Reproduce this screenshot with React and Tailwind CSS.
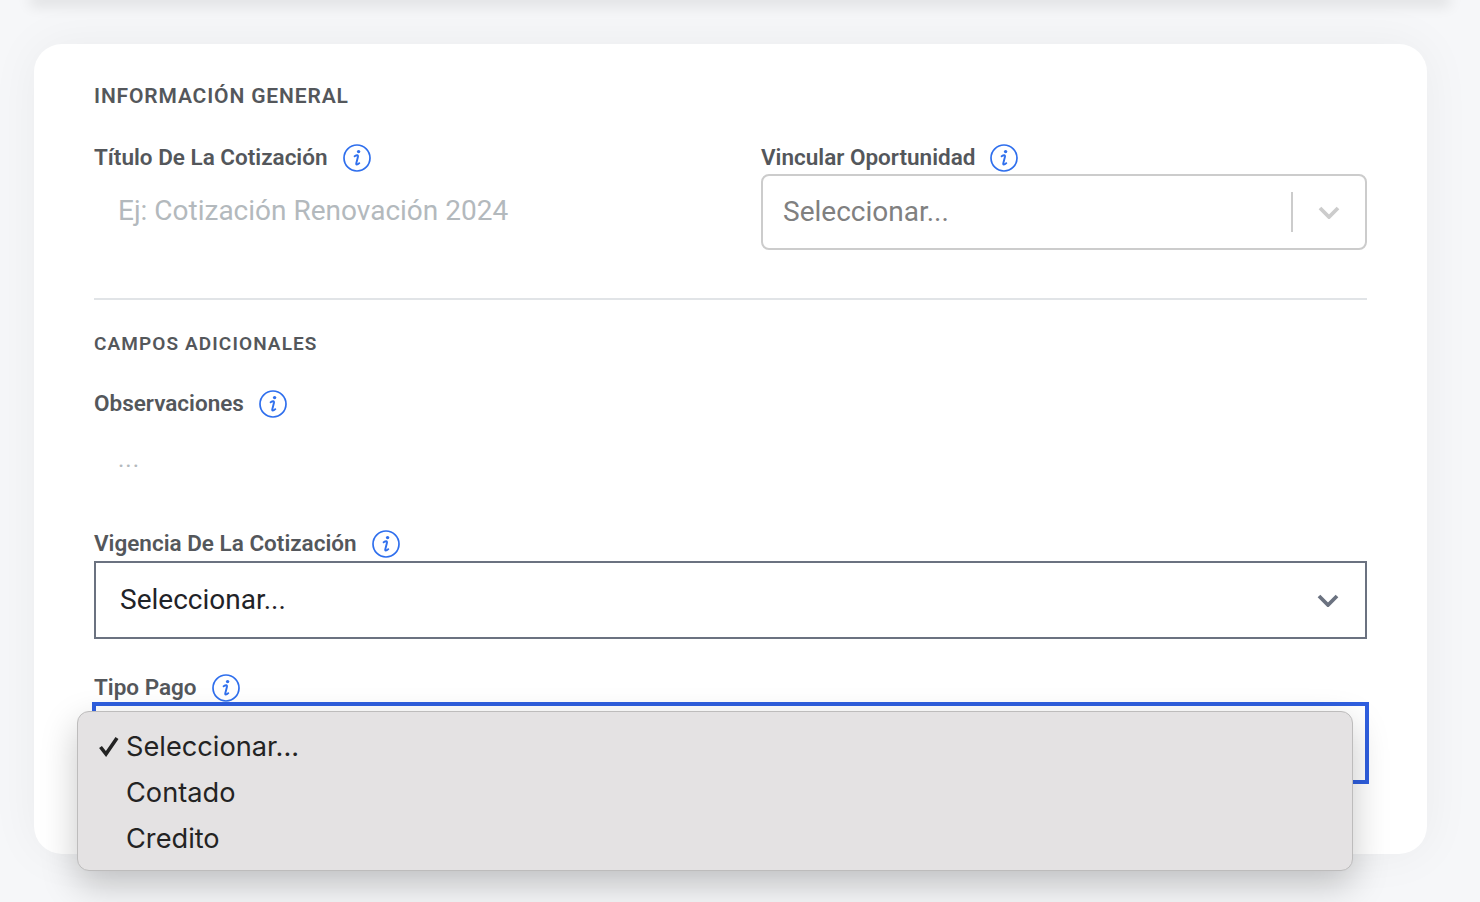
const labelFont = "font-['Roboto',sans-serif]";

function InfoIcon() {
  return (
    <svg width="28" height="28" viewBox="0 0 28 28" fill="none" className="shrink-0">
      <circle cx="14" cy="14" r="13" stroke="#2f6fed" strokeWidth="1.7" />
      <circle cx="15.6" cy="7.6" r="1.7" fill="#2f6fed" />
      <path
        d="M11.6 12.2c1-.6 2-1 2.8-.9.7.1.7.8.5 1.7l-1.6 6.2c-.2.9-.1 1.4.5 1.4.8 0 1.7-.6 2.5-1.4"
        stroke="#2f6fed"
        strokeWidth="1.9"
        strokeLinecap="round"
      />
    </svg>
  );
}

function Chevron({ color, className }) {
  return (
    <svg width="22" height="14" viewBox="0 0 22 14" fill="none" className={className}>
      <path d="M2 3l9 9 9-9" stroke={color} strokeWidth="3.8" />
    </svg>
  );
}

function FieldLabel({ children }) {
  return (
    <div className="flex items-center h-7 gap-[15px]">
      <span className="text-[22.5px] leading-[26px] pb-[2px] font-semibold text-[#54575b]">{children}</span>
      <InfoIcon />
    </div>
  );
}

function SectionTitle({ children, className }) {
  return (
    <h2 className={`font-semibold text-[#54575b] uppercase ${className}`}>{children}</h2>
  );
}

function NativeMenu() {
  return (
    <div className="absolute left-[77px] top-[711px] w-[1276px] h-[160px] rounded-[12px] bg-[#e4e2e3] border border-[#bdbcbc] shadow-[0_14px_36px_rgba(0,0,0,0.22)] pt-[12px] font-['Inter',sans-serif] text-[27.2px] leading-[46px] text-[#232323]">
      {["Seleccionar...", "Contado", "Credito"].map((opt, i) => (
        <div key={opt} className="relative pl-[48px]">
          {i === 0 && (
            <svg width="22" height="22" viewBox="0 0 22 22" fill="none" className="absolute left-[20px] top-[11px]">
              <path d="M2.5 12l5.5 7L19 3" stroke="#232323" strokeWidth="3.6" />
            </svg>
          )}
          {opt}
        </div>
      ))}
    </div>
  );
}

export default function App() {
  return (
    <div className={`relative h-[902px] overflow-hidden bg-[#f6f7f9] ${labelFont}`}>
      <div className="h-0 mx-[36px] shadow-[0_0_14px_6px_rgba(0,0,0,0.1)]" />

      <div className="ml-[34px] mt-[44px] w-[1393px] h-[810px] rounded-[28px] bg-white shadow-[0_0_50px_rgba(0,0,0,0.05)] px-[60px] pt-[40px]">
        <SectionTitle className="text-[21px] leading-6 tracking-[0.85px]">Información General</SectionTitle>

        <div className="grid grid-cols-2 gap-x-[61px] mt-[36px]">
          <div>
            <FieldLabel>Título De La Cotización</FieldLabel>
            <div className="pl-[24px] mt-[23px] text-[28px] leading-8 text-[#b3b9bd]">
              Ej: Cotización Renovación 2024
            </div>
          </div>
          <div>
            <FieldLabel>Vincular Oportunidad</FieldLabel>
            <div className="flex items-center h-[76px] mt-[2px] border-2 border-[#cccccc] rounded-[8px] pl-[20px]">
              <span className="flex-1 text-[28px] text-[#808080]">Seleccionar...</span>
              <div className="w-[2px] h-[40px] bg-[#cccccc]" />
              <Chevron color="#cccccc" className="mx-[25px]" />
            </div>
          </div>
        </div>

        <div className="h-[2px] bg-[#e1e4e7] mt-[48px]" />

        <SectionTitle className="mt-[32px] text-[19px] leading-6 tracking-[1.1px]">Campos Adicionales</SectionTitle>

        <div className="mt-[34px]">
          <FieldLabel>Observaciones</FieldLabel>
          <div className="pl-[24px] mt-[25px] text-[24px] leading-8 tracking-[1px] text-[#b3b9bd]">...</div>
        </div>

        <div className="mt-[55px]">
          <FieldLabel>Vigencia De La Cotización</FieldLabel>
          <div className="flex items-center justify-between h-[78px] mt-[3px] border-2 border-[#6b7280] pl-[24px] pr-[26px]">
            <span className="text-[28px] text-[#1f2328]">Seleccionar...</span>
            <Chevron color="#6b7280" />
          </div>
        </div>

        <div className="mt-[35px]">
          <FieldLabel>Tipo Pago</FieldLabel>
          <div className="h-[82px] -mx-[2px] border-[4px] border-[#2f5fdf]" />
        </div>
      </div>

      <NativeMenu />
    </div>
  );
}
